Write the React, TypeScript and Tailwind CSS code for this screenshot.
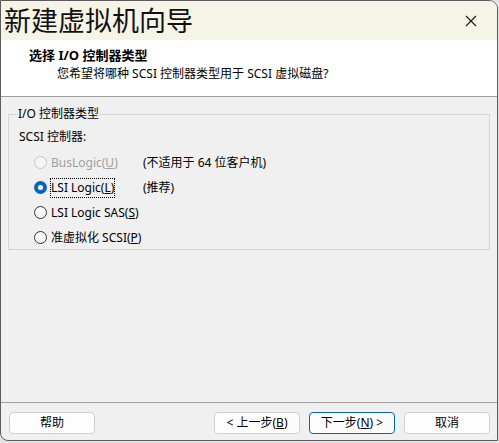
import React from 'react';

const font = { fontFamily: '"Noto Sans", "Noto Sans CJK SC", sans-serif' };

type RadioProps = {
  label: React.ReactNode;
  note?: string;
  checked?: boolean;
  disabled?: boolean;
  focused?: boolean;
};

const Radio: React.FC<RadioProps> = ({ label, note, checked, disabled, focused }) => (
  <div className="flex h-[25px] items-center whitespace-nowrap">
    <span
      className={
        checked
          ? 'flex h-[13px] w-[13px] shrink-0 items-center justify-center rounded-full bg-[#0067c0]'
          : disabled
            ? 'h-[13px] w-[13px] shrink-0 rounded-full border border-[#c5c5c5] bg-[#f5f5f5]'
            : 'h-[13px] w-[13px] shrink-0 rounded-full border border-[#333333] bg-[#f8f8f8]'
      }
    >
      {checked && <span className="h-[5px] w-[5px] rounded-full bg-white"></span>}
    </span>
    <span
      className={
        'ml-[3px] min-w-[93px] ' + (disabled ? 'text-[#a0a0a0]' : 'text-black')
      }
    >
      <span
        className={
          focused
            ? 'inline-block border border-dotted border-black leading-[18px]'
            : 'inline-block border border-transparent leading-[18px]'
        }
      >
        {label}
      </span>
    </span>
    {note && <span className="text-black">{note}</span>}
  </div>
);

const Button: React.FC<{ children: React.ReactNode; primary?: boolean }> = ({
  children,
  primary,
}) => (
  <button
    className={
      'h-[22px] w-[86px] whitespace-nowrap rounded-[4px] bg-[#fdfdfd] text-[12px] text-black ' +
      (primary ? 'border border-[#0067c0]' : 'border border-[#d0d0d0]')
    }
  >
    {children}
  </button>
);

export default function App() {
  return (
    <div className="h-[443px] w-[499px] bg-[#e3e3e3]" style={font}>
      <div className="flex h-[441px] w-[498px] flex-col overflow-hidden rounded-tr-[9px] rounded-bl-[8px] border border-[#5c5c5c] bg-[#f0f0f0] text-[12px]">
        <div className="flex h-[39px] shrink-0 items-center justify-between bg-[#f5f4e6] pl-[3px] pr-[20px]">
          <span className="text-[27px] leading-[39px] text-[#111111]">新建虚拟机向导</span>
          <svg width="12" height="12" viewBox="0 0 12 12" className="mt-[1px]">
            <path d="M1 1 L11 11 M11 1 L1 11" stroke="#1a1a1a" strokeWidth="1.1" />
          </svg>
        </div>
        <div className="h-[57px] shrink-0 border-b border-[#a0a0a0] bg-white pl-[28px] pt-[5px]">
          <div className="text-[13px] font-bold leading-[20px] text-black">选择 I/O 控制器类型</div>
          <div className="pl-[28px] leading-[18px] text-black">
            您希望将哪种 SCSI 控制器类型用于 SCSI 虚拟磁盘?
          </div>
        </div>
        <div className="flex-1 px-[7px] pt-[9px]">
          <fieldset className="h-[144px] border border-[#d6d6d6] pl-[10px]">
            <legend className="ml-[-2px] px-[1px] leading-[16px] text-black">I/O 控制器类型</legend>
            <div className="pt-[6px] leading-[18px] text-black">SCSI 控制器:</div>
            <div className="mt-[4px] pl-[15px]">
              <Radio
                disabled
                label={<>BusLogic(<u>U</u>)</>}
                note="(不适用于 64 位客户机)"
              />
              <Radio checked focused label={<>LSI Logic(<u>L</u>)</>} note="(推荐)" />
              <Radio label={<>LSI Logic SAS(<u>S</u>)</>} />
              <Radio label={<>准虚拟化 SCSI(<u>P</u>)</>} />
            </div>
          </fieldset>
        </div>
        <div className="flex h-[38px] shrink-0 items-start border-t border-[#a0a0a0] pl-[8px] pr-[7px] pt-[9px]">
          <Button>帮助</Button>
          <div className="ml-auto flex gap-[9px]">
            <Button>
              &lt; 上一步(<u>B</u>)
            </Button>
            <Button primary>
              下一步(<u>N</u>) &gt;
            </Button>
            <Button>取消</Button>
          </div>
        </div>
      </div>
    </div>
  );
}
